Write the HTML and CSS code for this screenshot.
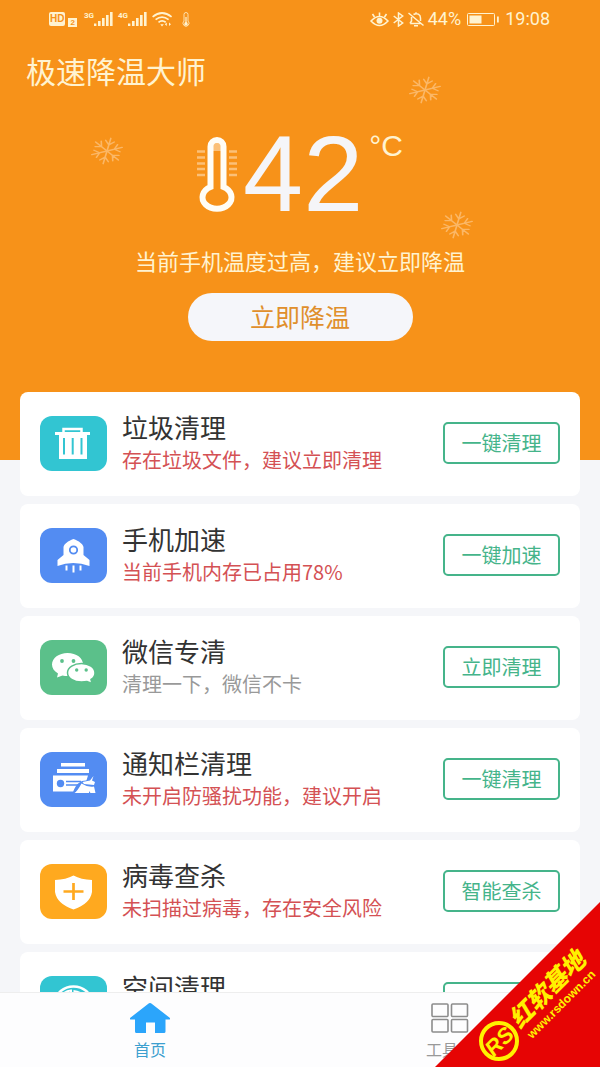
FILE: index.html
```html
<!DOCTYPE html>
<html lang="zh-CN">
<head>
<meta charset="utf-8">
<meta name="viewport" content="width=device-width, initial-scale=1">
<title>极速降温大师</title>
<link rel="stylesheet" href="styles.css">
</head>
<body>
<svg class="defs" width="0" height="0" aria-hidden="true">
  <symbol id="flake" viewBox="-17 -14 34 28">
    <g fill="none" stroke="currentColor" stroke-width="1.4" stroke-linecap="round" transform="scale(1.17 .97) rotate(14)">
      <path id="arm" d="M0 0V-13.500M0 -6.500L-3.800 -10.500M0 -6.500L3.800 -10.500"/>
      <use href="#arm" transform="rotate(60)"/><use href="#arm" transform="rotate(120)"/><use href="#arm" transform="rotate(180)"/><use href="#arm" transform="rotate(240)"/><use href="#arm" transform="rotate(300)"/>
    </g>
  </symbol>
  <symbol id="bars" viewBox="0 0 19 14">
    <path d="M0 11.5h2.4V14H0zM4 9h2.6v5H4zM8 6h2.6v8H8zM12 3h2.6v11H12zM16 0h2.6v14H16z" fill="currentColor"/>
  </symbol>
</svg>
<div class="app">
  <main class="scroll">
    <header class="hero">
      <div class="status">
        <div class="status-group">
          <span class="hd">HD</span><span class="sim">2</span>
          <span class="net">3G</span><svg class="signal" width="19" height="14"><use href="#bars"/></svg>
          <span class="net">4G</span><svg class="signal" width="19" height="14"><use href="#bars"/></svg>
          <svg class="wifi" width="21" height="15" viewBox="0 0 21 15" fill="none" stroke="currentColor" stroke-width="1.7"><path d="M.6 4.8Q10 -2.8 19.6 4.8M3.6 7.6Q10 2.6 16.6 7.6M6.5 10.3Q10 7.6 13.7 10.3"/><path d="M8.3 12.2h3.5L10 14.4zM14.800 10.500v3.500l-2-1.700zM17 10.500v3.500l2-1.700z" fill="currentColor" stroke="none"/></svg>
          <svg width="8" height="15" viewBox="0 0 8 15"><path d="M2 9V2.5a2 2 0 0 1 4 0V9a3 3 0 1 1-4 0z" fill="none" stroke="currentColor" stroke-width=".8"/><path d="M3.4 5h1.2v5l1 1v2.4H2.4V11l1-1z" fill="currentColor"/></svg>
        </div>
        <div class="status-group end">
          <svg width="19" height="15" viewBox="0 0 19 15" fill="none" stroke="currentColor" stroke-width="1.6"><path d="M1 9Q9.500 0 18 9Q9.500 18 1 9zM9.500 4V.5M4.500 5L2.500 2M14.500 5l2-3"/><circle cx="9.500" cy="8.800" r="3" fill="currentColor" stroke="none"/></svg>
          <svg width="11" height="15" viewBox="0 0 11 15" fill="none" stroke="currentColor" stroke-width="1.5"><path d="M.7 4l9 7L5.500 14V1l4.200 3L.7 11"/></svg>
          <svg width="16" height="15" viewBox="0 0 16 15" fill="none" stroke="currentColor" stroke-width="1.500"><path d="M.5 1l15 12.500M2 11.500L3.500 9V5M5.500 2.500C9 .5 12.500 2.500 12.500 6v3M2 11.500h10.500M6 13.700h4M8 .3v1.200"/></svg>
          <span>44%</span>
          <svg class="battery" width="32" height="13" viewBox="0 0 32 13"><rect x=".5" y=".5" width="27" height="12" rx="1" fill="none" stroke="currentColor"/><path d="M2.500 2.500h12v8h-12zM30 3.500h1.800v6H30z" fill="currentColor"/></svg>
          <span>19:08</span>
        </div>
      </div>
      <h1 class="title">极速降温大师</h1>
      <div class="gauge">
        <svg width="40" height="75" viewBox="0 0 40 75" fill="none">
          <path d="M0 14.500h8M0 20.500h8M0 26.500h8M0 32h8M0 38h8M32 14.500h8M32 20.500h8M32 26.500h8M32 32h8M32 38h8" stroke="#fbc078" stroke-width="2.500"/>
          <path d="M16 14V10a4 4 0 0 1 8 0v4z" fill="#fbc078"/>
          <path d="M13.500 50V9.500a6.500 6.500 0 0 1 13 0V50A14.500 11.500 0 1 1 13.500 50z" stroke="#fffdf6" stroke-width="6"/>
        </svg>
        <span class="degrees">42</span>
        <span class="unit">°C</span>
      </div>
      <p class="message">当前手机温度过高，建议立即降温</p>
      <button class="cool" type="button">立即降温</button>
      <svg class="flake flake-left" width="34" height="28" aria-hidden="true"><use href="#flake"/></svg>
      <svg class="flake flake-top" width="34" height="28" aria-hidden="true"><use href="#flake"/></svg>
      <svg class="flake flake-right" width="34" height="28" aria-hidden="true"><use href="#flake"/></svg>
    </header>

    <section class="cards">
      <article class="card">
        <svg class="icon teal" viewBox="0 0 67 55"><path d="M15 16h35v3H15zM19 19h28v24H19z" fill="#fff"/><path d="M23.500 17v-4h18v4" fill="none" stroke="#fff" stroke-width="2.500"/><path d="M24 22v16.500M32.700 22v16.500M41.500 22v16.500" stroke="#32c5d2" stroke-width="2"/></svg>
        <div class="text"><h2>垃圾清理</h2><p>存在垃圾文件，建议立即清理</p></div>
        <button class="action" type="button">一键清理</button>
      </article>
      <article class="card">
        <svg class="icon blue" viewBox="0 0 67 55"><path d="M33.500 11C39 13 43 16 43.500 19v8l6 5v6Q33 32 17.500 38v-6l6-5v-8C24 16 28 13 33.500 11z" fill="#fff"/><circle cx="33.500" cy="22" r="3.700" fill="none" stroke="#538cf2" stroke-width="1.800"/><path d="M26.500 37.500v5M33.500 37.500v7M40.500 37.500v5" stroke="#fff" stroke-width="2"/></svg>
        <div class="text"><h2>手机加速</h2><p>当前手机内存已占用78%</p></div>
        <button class="action" type="button">一键加速</button>
      </article>
      <article class="card">
        <svg class="icon green" viewBox="0 0 67 55"><path d="M27.500 13c9 0 15.500 5 15.500 11.500S36 36 27.500 36q-2.500 0-5-.5L17 37.500l1-4C14 31 12 28 12 24.500 12 18 19 13 27.500 13z" fill="#fff"/><path d="M41.500 23.500c7.500 0 13.500 4 13.500 9.500 0 3-1.500 5-4 6.500l1 4-5-2q-2.500.5-5.500.5c-8 0-14-4-14-9.300s6.500-9.200 14-9.200z" fill="#fff" stroke="#5bc08a" stroke-width="1.500"/><g fill="#5bc08a"><circle cx="22" cy="21" r="1.900"/><circle cx="33.500" cy="21" r="1.900"/><circle cx="36.700" cy="30" r="1.700"/><circle cx="46.200" cy="30" r="1.700"/></g></svg>
        <div class="text"><h2>微信专清</h2><p class="calm">清理一下，微信不卡</p></div>
        <button class="action" type="button">立即清理</button>
      </article>
      <article class="card">
        <svg class="icon blue" viewBox="0 0 67 55"><path d="M21 11h24v3.500H21zM17 17h32v4H17zM13 23.500h35L43 39.500H13z" fill="#fff"/><circle cx="20.500" cy="31.500" r="3.700" fill="#538cf2"/><path d="M26 29.500h15M26 33h12" stroke="#538cf2" stroke-width="1.500"/><path d="M52 23.500l-2.500 4.500-7.500 1C36 32 34 37 32.500 42H57V23z" fill="#538cf2"/><path d="M53.500 24L50 28.500l-7.500 1.500 1.500 2 10 1 1-3-3-1.500zM41.500 31.500q6 4 12.500 3l1.500 6.500h-5l-1.500-2v2H34.500q3-2 7-9.500z" fill="#fff"/></svg>
        <div class="text"><h2>通知栏清理</h2><p>未开启防骚扰功能，建议开启</p></div>
        <button class="action" type="button">一键清理</button>
      </article>
      <article class="card">
        <svg class="icon amber" viewBox="0 0 67 55"><path d="M33.500 11.500Q41 15.500 52 16v12Q50 40 33.500 45.500 17 40 15 28V16Q26 15.500 33.500 11.500z" fill="#fff"/><path d="M23.500 27.500h20M33.500 19v17" stroke="#ffa91f" stroke-width="2.700"/></svg>
        <div class="text"><h2>病毒查杀</h2><p>未扫描过病毒，存在安全风险</p></div>
        <button class="action" type="button">智能查杀</button>
      </article>
      <article class="card">
        <svg class="icon teal" viewBox="0 0 67 55"><ellipse cx="33.500" cy="26" rx="18" ry="15.500" fill="none" stroke="#fff" stroke-width="2.500"/><path d="M33.500 26V14Q45 15 47 26z" fill="#fff"/><path d="M21 20q4-5 10-5.500V26" fill="none" stroke="#fff" stroke-width="2"/></svg>
        <div class="text"><h2>空间清理</h2><p>手机空间不足，建议清理</p></div>
        <button class="action" type="button">一键清理</button>
      </article>
    </section>
  </main>

  <nav class="tabs">
    <a class="tab active" href="#home">
      <svg width="40" height="30" viewBox="0 0 40 30"><path d="M20 0Q21 0 22 1L40 15Q40.500 16.500 39 16.500H35.500V28.500Q35.500 30 34 30H25V19.500H16V30H6.500Q5 30 5 28.500V16.500H1Q-.5 16.500 0 15L18 1Q19 0 20 0z" fill="#2ba5fb"/></svg>
      <span>首页</span>
    </a>
    <a class="tab" href="#tools">
      <svg width="38" height="30" viewBox="0 0 38 30" fill="none" stroke="#8c8c8c" stroke-width="1.600"><rect x="1" y="1" width="16" height="12.500" rx="1"/><rect x="20.500" y="1" width="16" height="12.500" rx="1"/><rect x="1" y="16.500" width="16" height="12.500" rx="1"/><rect x="20.500" y="16.500" width="16" height="12.500" rx="1"/></svg>
      <span>工具箱</span>
    </a>
  </nav>

  <svg class="ribbon" width="165" height="165" viewBox="0 0 165 165">
    <path d="M165 0V165H0z" fill="#e60404"/>
    <g class="ribbon-ink">
      <circle cx="64" cy="139" r="18" fill="none" stroke="#fff100" stroke-width="4"/>
      <text class="mark" transform="translate(64 139) rotate(-45)" y="8" text-anchor="middle">RS</text>
      <text class="brand" transform="translate(112 87) rotate(-45)" y="9" text-anchor="middle">红软基地</text>
      <text class="site" transform="translate(127 103) rotate(-45)" y="3" text-anchor="middle">www.rsdown.cn</text>
    </g>
  </svg>
</div>
</body>
</html>
```
FILE: styles.css
```css
* {
  box-sizing: border-box;
}

body,
h1,
h2,
p {
  margin: 0;
  font-weight: 400;
}

body {
  font-family: "Noto Sans CJK SC", "Liberation Sans", sans-serif;
  background: #f5f6f9;
}

.defs {
  position: absolute;
}

button {
  font: inherit;
  cursor: pointer;
}

.app {
  position: relative;
  display: flex;
  flex-direction: column;
  height: 100vh;
}

.scroll {
  flex: 1;
  min-height: 0;
  overflow-y: auto;
  scrollbar-width: none;
}

/* Hero */
.hero {
  position: relative;
  display: flex;
  flex-direction: column;
  align-items: center;
  padding-bottom: 119px;
  background: #f79219;
  color: #fff3d0;
}

.status {
  display: flex;
  align-items: center;
  justify-content: space-between;
  align-self: stretch;
  height: 38px;
  padding: 0 50px 0 49px;
  font: 18px/20px Roboto, sans-serif;
}

.status-group {
  display: flex;
  align-items: center;
}

.status-group.end {
  gap: 4px;
}

.battery {
  margin: 0 2px;
}

.hd {
  padding: 0 1px;
  border-radius: 2px;
  background: #fff3d0;
  color: #f79219;
  font: bold 10px/14px "Liberation Sans", sans-serif;
}

.sim {
  align-self: flex-end;
  margin: 0 7px 0 3px;
  padding: 0 2px;
  background: #fff3d0;
  color: #f79219;
  font: bold 8px/9px "Liberation Sans", sans-serif;
}

.net {
  align-self: flex-start;
  font: bold 8px/8px Roboto, sans-serif;
}

.signal {
  margin-right: 5px;
}

.wifi {
  margin-right: 9px;
}

.title {
  align-self: stretch;
  margin-top: 12px;
  padding-left: 26px;
  font-size: 30px;
  line-height: 40px;
}

.gauge {
  display: flex;
  align-items: center;
  justify-content: center;
  gap: 6px;
  height: 92px;
  margin-top: 38px;
}

.degrees {
  color: #f5f5f8;
  font: 108px/92px "Liberation Sans", sans-serif;
}

.unit {
  align-self: flex-start;
  font: 30px/36px "Liberation Sans", sans-serif;
}

.message {
  margin-top: 26px;
  font-size: 22px;
  line-height: 28px;
}

.cool {
  width: 225px;
  height: 48px;
  margin-top: 19px;
  padding: 0 0 2px;
  border: 0;
  border-radius: 24px;
  background: #f5f6fa;
  color: #e08f2c;
  font-size: 25px;
  line-height: 46px;
}

.flake {
  position: absolute;
  color: #fbb766;
}

.flake-left {
  left: 15%;
  top: 137px;
}

.flake-top {
  left: 68%;
  top: 76px;
}

.flake-right {
  right: 21%;
  top: 211px;
}

/* Cards */
.cards {
  position: relative;
  display: flex;
  flex-direction: column;
  gap: 8px;
  margin-top: -68px;
  padding: 0 20px 8px;
}

.card {
  display: flex;
  align-items: center;
  gap: 15px;
  height: 104px;
  padding: 0 20px 2px;
  border-radius: 8px;
  background: #fff;
}

.icon {
  flex: none;
  width: 67px;
  height: 55px;
  border-radius: 12px;
}

.teal {
  background: #32c5d2;
}

.blue {
  background: #538cf2;
}

.green {
  background: #5bc08a;
}

.amber {
  background: #ffa91f;
}

.text {
  flex: 1;
  min-width: 0;
  white-space: nowrap;
}

.text h2 {
  color: #333;
  font-size: 26px;
  line-height: 34px;
}

.text p {
  color: #d45154;
  font-size: 20px;
  line-height: 32px;
}

.text .calm {
  color: #999;
}

.action {
  flex: none;
  width: 117px;
  height: 42px;
  padding: 0;
  border: 2px solid #45b48a;
  border-radius: 5px;
  background: #fff;
  color: #45b48a;
  font-size: 20px;
  line-height: 36px;
}

/* Bottom tabs */
.tabs {
  display: flex;
  flex: none;
  height: 75px;
  border-top: 1px solid #eee;
  background: #fdfdfe;
}

.tab {
  display: flex;
  flex: 1;
  flex-direction: column;
  align-items: center;
  gap: 4px;
  padding-top: 10px;
  color: #999;
  font-size: 16px;
  line-height: 24px;
  text-decoration: none;
}

.tab.active {
  color: #3c9fcf;
}

/* Corner ribbon */
.ribbon {
  position: absolute;
  right: 0;
  bottom: 0;
}

.ribbon-ink {
  fill: #fff100;
}

.mark {
  font: italic bold 22px "Liberation Sans", sans-serif;
}

.brand {
  font: italic 900 24px "Noto Sans CJK SC", sans-serif;
}

.site {
  font: bold 12px "Liberation Sans", sans-serif;
}
```
